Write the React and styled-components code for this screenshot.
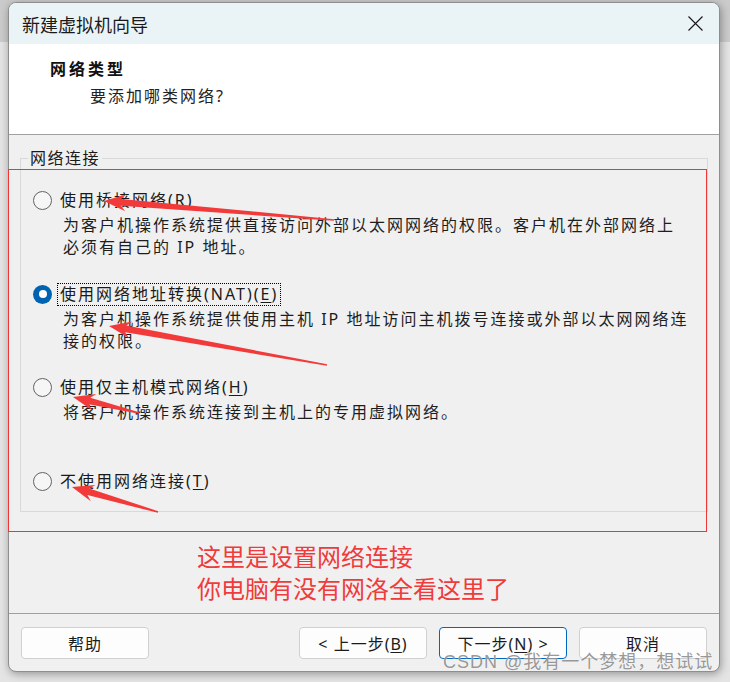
import React from "react";
import styled, { createGlobalStyle } from "styled-components";

const GlobalStyle = createGlobalStyle`
  html, body { margin: 0; padding: 0; }
  body {
    width: 730px;
    height: 682px;
    overflow: hidden;
    background: linear-gradient(to bottom, #cbcbcb 0px, #cbcbcb 42px, #e4e4e4 42px, #e4e4e4 100%);
    font-family: "Noto Sans", "Noto Sans CJK SC", sans-serif;
  }
  * { box-sizing: border-box; }
`;

const Page = styled.div`
  position: relative;
  width: 730px;
  height: 682px;
  padding: 2px 0 0 8px;
`;

const Dialog = styled.div`
  width: 712px;
  height: 670px;
  display: flex;
  flex-direction: column;
  border: 1px solid #8e8e8e;
  border-radius: 8px;
  overflow: hidden;
  background: #f0f0f0;
  box-shadow: 1px 2px 8px rgba(0, 0, 0, 0.35);
`;

const TitleBar = styled.div`
  height: 41px;
  flex: none;
  display: flex;
  align-items: center;
  justify-content: space-between;
  padding: 0 16px 0 13px;
  background: #eaf4f7;
`;

const Title = styled.div`
  font-family: "Noto Sans CJK SC", sans-serif;
  font-size: 18px;
  line-height: 24px;
  color: #1a1a1a;
`;

const CloseIcon = styled.svg`
  width: 15px;
  height: 15px;
  display: block;
`;

const Header = styled.div`
  height: 91px;
  flex: none;
  background: #ffffff;
  border-bottom: 1px solid #a0a0a0;
  padding: 14px 0 0 41px;
`;

const Heading = styled.div`
  font-family: "Noto Sans CJK SC", sans-serif;
  font-size: 16px;
  font-weight: 700;
  letter-spacing: 3px;
  line-height: 20px;
  color: #111111;
`;

const SubHeading = styled.div`
  margin: 8px 0 0 40px;
  font-size: 16px;
  letter-spacing: 2px;
  line-height: 20px;
  color: #222222;
`;

const Body = styled.div`
  flex: 1;
  display: flex;
  flex-direction: column;
  padding-top: 13px;
`;

const Group = styled.fieldset`
  margin: 0 11px;
  padding: 21px 0 19px 7px;
  border: 1px solid #d9d9d9;
  min-width: 0;
`;

const Legend = styled.legend`
  padding: 0 2px;
  font-size: 16px;
  letter-spacing: 1.5px;
  line-height: 20px;
  color: #1a1a1a;
`;

const Options = styled.div`
  display: grid;
  grid-template-rows: 94px 93px 94px auto;
  padding-left: 5px;
`;

const Option = styled.div`
  display: flex;
  flex-direction: column;
`;

const OptionRow = styled.div`
  display: flex;
  align-items: center;
  gap: 7px;
  height: 22px;
`;

const Radio = styled.span`
  width: 19px;
  height: 19px;
  flex: none;
  border-radius: 50%;
  display: grid;
  place-items: center;
  border: ${(p) => (p.$checked ? "none" : "1px solid #636363")};
  background: ${(p) => (p.$checked ? "#0063b1" : "#f6f6f6")};
  &::after {
    content: "";
    width: 8px;
    height: 8px;
    border-radius: 50%;
    background: #ffffff;
    display: ${(p) => (p.$checked ? "block" : "none")};
  }
`;

const Label = styled.span`
  font-size: 16px;
  letter-spacing: 2px;
  line-height: 21px;
  color: #1a1a1a;
  white-space: nowrap;
  padding: 0 2px 0 2px;
  margin-left: -2px;
  border: 1px dotted ${(p) => (p.$focused ? "#000000" : "transparent")};
  u { text-underline-offset: 2px; }
`;

const Desc = styled.div`
  margin: 3px 0 0 30px;
  font-size: 16px;
  letter-spacing: 2px;
  line-height: 22px;
  color: #1e1e1e;
  white-space: nowrap;
`;

const Note = styled.div`
  margin: 28px 0 0 188px;
  font-family: "Noto Sans CJK SC", sans-serif;
  font-size: 24px;
  line-height: 32px;
  color: #ef3b3b;
`;

const Footer = styled.div`
  height: 58px;
  flex: none;
  border-top: 1px solid #a0a0a0;
  display: flex;
  justify-content: space-between;
  align-items: flex-start;
  padding: 13px 12px 0 12px;
`;

const ButtonGroup = styled.div`
  display: flex;
  gap: 12px;
`;

const Btn = styled.button`
  width: 128px;
  height: 32px;
  padding: 0;
  border: 1px solid ${(p) => (p.$primary ? "#0067c0" : "#d0d0d0")};
  border-radius: 4px;
  background: #fdfdfd;
  font-family: "Noto Sans", "Noto Sans CJK SC", sans-serif;
  font-size: 16px;
  letter-spacing: 1px;
  color: #1b1b1b;
  u { text-underline-offset: 2px; }
`;

const Overlay = styled.svg`
  position: absolute;
  left: 0;
  top: 0;
  width: 730px;
  height: 682px;
  pointer-events: none;
`;

const Watermark = styled.div`
  position: absolute;
  left: 443px;
  top: 651px;
  font-family: "Liberation Sans", "Noto Sans CJK SC", sans-serif;
  font-size: 18px;
  line-height: 22px;
  letter-spacing: 1px;
  color: rgba(125, 125, 125, 0.8);
  text-shadow: 0 0 1px rgba(255, 255, 255, 0.9);
  white-space: nowrap;
  pointer-events: none;
`;

function arrowPoints(tip, tail, L = 22, W = 8.5, w = 3.4, tailW = 0.8) {
  const [tx, ty] = tip;
  const [ex, ey] = tail;
  const dx = ex - tx;
  const dy = ey - ty;
  const len = Math.hypot(dx, dy);
  const ux = dx / len;
  const uy = dy / len;
  const nx = -uy;
  const ny = ux;
  const p = (a, b) => [tx + ux * a + nx * b, ty + uy * a + ny * b];
  const pts = [
    p(0, 0),
    p(L, W),
    p(L - 5, w),
    [ex + nx * tailW, ey + ny * tailW],
    [ex - nx * tailW, ey - ny * tailW],
    p(L - 5, -w),
    p(L, -W),
  ];
  return pts.map(([x, y]) => `${x.toFixed(1)},${y.toFixed(1)}`).join(" ");
}

const arrows = [
  { tip: [104, 201], tail: [334, 220] },
  { tip: [109, 326], tail: [327, 365] },
  { tip: [73, 397], tail: [139, 413] },
  { tip: [72, 487], tail: [158, 512] },
];

const options = [
  {
    label: "使用桥接网络(",
    key: "R",
    desc: ["为客户机操作系统提供直接访问外部以太网网络的权限。客户机在外部网络上", "必须有自己的 IP 地址。"],
  },
  {
    label: "使用网络地址转换(NAT)(",
    key: "E",
    checked: true,
    desc: ["为客户机操作系统提供使用主机 IP 地址访问主机拨号连接或外部以太网网络连", "接的权限。"],
  },
  {
    label: "使用仅主机模式网络(",
    key: "H",
    desc: ["将客户机操作系统连接到主机上的专用虚拟网络。"],
  },
  {
    label: "不使用网络连接(",
    key: "T",
    desc: [],
  },
];

export default function App() {
  return (
    <>
      <GlobalStyle />
      <Page>
        <Dialog>
          <TitleBar>
            <Title>新建虚拟机向导</Title>
            <CloseIcon viewBox="0 0 15 15">
              <path d="M0.5 0.5 L14.5 14.5 M14.5 0.5 L0.5 14.5" stroke="#1a1a1a" strokeWidth="1.15" fill="none" />
            </CloseIcon>
          </TitleBar>
          <Header>
            <Heading>网络类型</Heading>
            <SubHeading>要添加哪类网络?</SubHeading>
          </Header>
          <Body>
            <Group>
              <Legend>网络连接</Legend>
              <Options>
                {options.map((o) => (
                  <Option key={o.key}>
                    <OptionRow>
                      <Radio $checked={!!o.checked} />
                      <Label $focused={!!o.checked}>
                        {o.label}
                        <u>{o.key}</u>)
                      </Label>
                    </OptionRow>
                    {o.desc.length > 0 && (
                      <Desc>
                        {o.desc.map((line, i) => (
                          <div key={i}>{line}</div>
                        ))}
                      </Desc>
                    )}
                  </Option>
                ))}
              </Options>
            </Group>
            <Note>
              这里是设置网络连接
              <br />
              你电脑有没有网洛全看这里了
            </Note>
          </Body>
          <Footer>
            <Btn>帮助</Btn>
            <ButtonGroup>
              <Btn>
                &lt; 上一步(<u>B</u>)
              </Btn>
              <Btn $primary>
                下一步(<u>N</u>) &gt;
              </Btn>
              <Btn>取消</Btn>
            </ButtonGroup>
          </Footer>
        </Dialog>
        <Overlay viewBox="0 0 730 682">
          <rect x="8.5" y="169.5" width="698" height="362" fill="none" stroke="#ef3535" strokeWidth="1" />
          {arrows.map((a, i) => (
            <polygon key={i} points={arrowPoints(a.tip, a.tail)} fill="#f23a3a" />
          ))}
        </Overlay>
        <Watermark>CSDN @我有一个梦想，想试试</Watermark>
      </Page>
    </>
  );
}
